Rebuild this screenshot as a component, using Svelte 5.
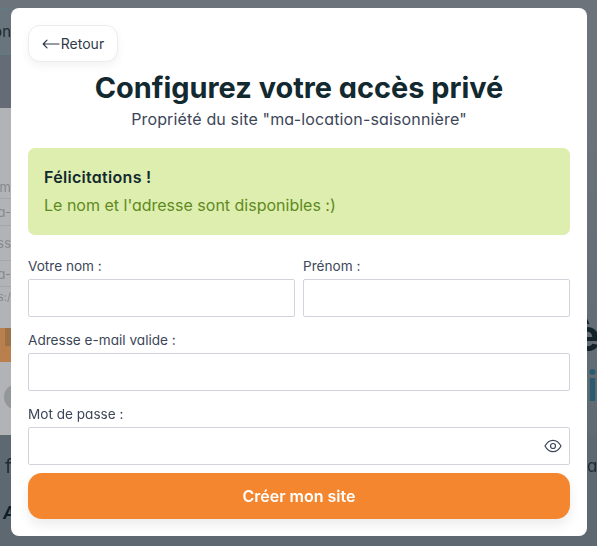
<script>
  let showPassword = false;
</script>

<div class="page">
  <header class="topbar">
    <div class="nav-box"><span class="nav-word">on</span></div>
  </header>
  <div class="subbar"></div>
  <main class="hero">
    <div class="side">
      <div class="list">
        <span class="row r1">m</span>
        <span class="row r2">a-</span>
        <span class="row r3">ess</span>
        <span class="row r4">a-</span>
        <span class="row r5">s:/</span>
      </div>
      <div class="orange-strip"><span class="tri"></span></div>
      <div class="circle-row"><span class="circle"></span></div>
    </div>
    <div class="right-text">
      <span class="big">è</span>
      <span class="teal">is</span>
      <span class="tiny">a</span>
    </div>
  </main>
  <div class="footer-text">
    <span class="f">f</span>
    <span class="a">A</span>
  </div>
</div>

<div class="modal">
  <button class="back" type="button">
    <svg width="18" height="10" viewBox="0 0 18 10" fill="none" stroke="currentColor" stroke-width="1.2" stroke-linecap="round" stroke-linejoin="round">
      <path d="M17 5H1.2M5 1.2 1.2 5 5 8.8" />
    </svg>
    Retour
  </button>

  <h1>Configurez votre accès privé</h1>
  <p class="subtitle">Propriété du site "ma-location-saisonnière"</p>

  <div class="alert">
    <strong>Félicitations !</strong>
    <span>Le nom et l'adresse sont disponibles :)</span>
  </div>

  <form class="fields" on:submit|preventDefault>
    <div class="two">
      <label>
        Votre nom :
        <input type="text" />
      </label>
      <label>
        Prénom :
        <input type="text" />
      </label>
    </div>
    <label>
      Adresse e-mail valide :
      <input type="email" />
    </label>
    <label>
      Mot de passe :
      <span class="password">
        {#if showPassword}
          <input type="text" />
        {:else}
          <input type="password" />
        {/if}
        <button class="eye" type="button" aria-label="Afficher" on:click={() => (showPassword = !showPassword)}>
          <svg width="18" height="14" viewBox="0 0 18 14" fill="none" stroke="currentColor" stroke-width="1.2">
            <path d="M1 7C3 3.2 5.8 1.3 9 1.3S15 3.2 17 7C15 10.8 12.2 12.7 9 12.7S3 10.8 1 7Z" />
            <circle cx="9" cy="7" r="2.5" />
          </svg>
        </button>
      </span>
    </label>
    <button class="submit" type="submit">Créer mon site</button>
  </form>
</div>

<style>
  :global(body) {
    margin: 0;
    overflow: hidden;
    font-family: Inter, "Noto Sans", sans-serif;
    font-feature-settings: "cv11";
  }

  .page {
    height: 546px;
    display: flex;
    flex-direction: column;
    background: #5d6871;
    overflow: hidden;
    filter: blur(0.6px);
  }

  .topbar {
    height: 55px;
    padding-top: 8px;
    box-sizing: border-box;
    background: #6c737a;
  }

  .nav-box {
    width: 11px;
    height: 47px;
    box-sizing: border-box;
    background: #68757d;
    border-top: 1px solid #5f7c84;
    border-bottom: 1px solid #5f7c84;
    display: flex;
    align-items: center;
    justify-content: flex-end;
    overflow: hidden;
  }

  .nav-word {
    font-size: 15px;
    color: #1c2a30;
  }

  .subbar {
    height: 53px;
    background: linear-gradient(90deg, #656c75 587px, #6c737a 587px);
  }

  .hero {
    height: 327px;
    display: flex;
    justify-content: space-between;
    background: linear-gradient(#6c737a, #5f6a73);
  }

  .side {
    width: 11px;
    background: #b1b3b6;
    display: flex;
    flex-direction: column;
  }

  .list {
    height: 220px;
    padding-top: 67px;
    box-sizing: border-box;
    display: flex;
    flex-direction: column;
    color: #85888d;
    font-size: 13px;
  }

  .row {
    display: flex;
    justify-content: flex-end;
    align-items: center;
    box-sizing: border-box;
    border-bottom: 1px solid #a4a6a9;
    white-space: nowrap;
    overflow: hidden;
  }

  .r1 { height: 24px; }
  .r2 { height: 27px; }
  .r3 { height: 35px; }
  .r4 { height: 26px; }
  .r5 { height: 20px; border: none; font-size: 11px; }

  .orange-strip {
    height: 34px;
    background: #b97f4c;
    overflow: hidden;
  }

  .tri {
    display: block;
    margin-left: 5px;
    width: 0;
    border-left: 6px solid #9d7148;
    border-top: 18px solid #9d7148;
    border-right: 5px solid transparent;
  }

  .circle-row {
    flex: 1;
    overflow: hidden;
    padding-top: 22px;
  }

  .circle {
    display: block;
    width: 26px;
    height: 26px;
    margin-left: 4px;
    border-radius: 50%;
    background: #94979a;
  }

  .right-text {
    width: 10px;
    height: 400px;
    padding-top: 202px;
    box-sizing: border-box;
    display: flex;
    flex-direction: column;
    overflow: hidden;
  }

  .big {
    font-size: 44px;
    font-weight: 700;
    line-height: 50px;
    color: #12232b;
    margin-left: -13px;
  }

  .teal {
    font-size: 42px;
    font-weight: 600;
    line-height: 52px;
    color: #2a5b70;
    white-space: nowrap;
  }

  .tiny {
    margin-top: 44px;
    font-size: 17px;
    line-height: 20px;
    color: #1d2a33;
  }

  .footer-text {
    flex: 1;
    display: flex;
    flex-direction: column;
    padding: 20px 0 0 5px;
    color: #1c2a33;
  }

  .f {
    font-size: 19px;
  }

  .a {
    margin-top: 25px;
    margin-left: -2px;
    font-size: 17px;
    font-weight: 700;
    font-style: italic;
    color: #0f2029;
  }

  .modal {
    position: fixed;
    top: 8px;
    left: 11px;
    width: 576px;
    height: 528px;
    box-sizing: border-box;
    padding: 17px;
    background: #fff;
    border-radius: 8px;
    display: flex;
    flex-direction: column;
    color: #3c4658;
  }

  .back {
    align-self: flex-start;
    width: 90px;
    height: 38px;
    box-sizing: border-box;
    display: flex;
    align-items: center;
    justify-content: center;
    gap: 1px;
    border: 1px solid #ececf0;
    border-radius: 12px;
    background: #fff;
    box-shadow: 0 4px 10px rgba(0, 0, 0, 0.05);
    font: inherit;
    font-size: 14px;
    color: #2f3a47;
  }

  h1 {
    margin: 9px 0 0;
    text-align: center;
    font-size: 28.9px;
    line-height: 34px;
    font-weight: 700;
    color: #12292f;
  }

  .subtitle {
    margin: 3px 0 0;
    text-align: center;
    font-size: 16px;
    line-height: 22px;
    letter-spacing: 0.15px;
    color: #3c4658;
  }

  .alert {
    margin-top: 18px;
    height: 88px;
    box-sizing: border-box;
    padding: 19px 16px 0;
    display: flex;
    flex-direction: column;
    gap: 8px;
    border-radius: 7px;
    background: #deeeae;
    font-size: 16px;
    line-height: 20px;
    color: #5e8a23;
  }

  .alert strong {
    font-weight: 600;
    color: #12292f;
    letter-spacing: 0.3px;
  }

  .fields {
    margin-top: 23px;
    display: flex;
    flex-direction: column;
    gap: 15px;
  }

  .two {
    display: grid;
    grid-template-columns: 1fr 1fr;
    gap: 8px;
  }

  label {
    display: flex;
    flex-direction: column;
    gap: 4px;
    font-size: 13.6px;
    line-height: 17px;
    color: #3c4658;
  }

  input {
    width: 100%;
    height: 38px;
    box-sizing: border-box;
    padding: 0 10px;
    border: 1px solid #d2d4dd;
    border-radius: 2px;
    background: #fff;
    outline: none;
  }

  .password {
    position: relative;
    display: block;
  }

  .eye {
    position: absolute;
    top: 12px;
    right: 8px;
    padding: 0;
    display: flex;
    border: none;
    background: none;
    color: #3c4658;
  }

  .submit {
    height: 46px;
    margin-top: -7px;
    border: none;
    border-radius: 14px;
    background: #f3862f;
    box-shadow: 0 6px 12px rgba(0, 0, 0, 0.08);
    font: inherit;
    font-size: 16px;
    font-weight: 600;
    color: #fff;
  }
</style>
